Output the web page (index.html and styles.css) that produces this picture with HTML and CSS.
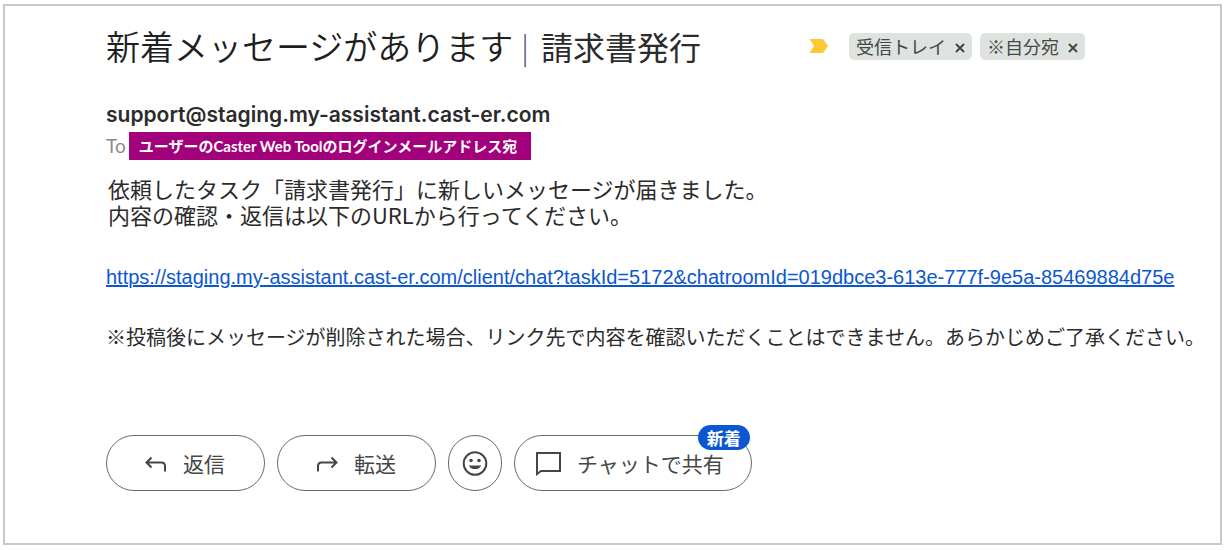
FILE: index.html
```
<!DOCTYPE html>
<html lang="ja">
<head>
	<meta charset="UTF-8">
	<title>新着メッセージがあります｜請求書発行</title>
	<link rel="stylesheet" href="styles.css">
</head>
<body>

	<main class="mail">
		<header class="mail_header">
			<h1 class="subject"><span class="subject_notice">新着メッセージがあります</span><span class="subject_bar">|</span><span class="subject_task">請求書発行</span></h1>
			<svg class="important" width="20" height="16" viewBox="0 0 20 16" aria-hidden="true">
				<path d="M0.5 1h12.5q1 0 1.6 .8L19 8l-4.4 6.200q-.6 .8-1.6 .8H0.5L5 8z" fill="#fcc934"/>
			</svg>
			<div class="label">受信トレイ<button type="button" class="label_remove" aria-label="受信トレイを削除"><svg width="10" height="10" viewBox="0 0 10 10"><path d="M1 1l8 8M9 1l-8 8"/></svg></button></div>
			<div class="label">※自分宛<button type="button" class="label_remove" aria-label="※自分宛を削除"><svg width="10" height="10" viewBox="0 0 10 10"><path d="M1 1l8 8M9 1l-8 8"/></svg></button></div>
		</header>

		<div class="sender">support@staging.my-assistant.cast-er.com</div>
		<div class="recipient">
			<span>To</span>
			<span class="recipient_note">ユーザーのCaster Web Toolのログインメールアドレス宛</span>
		</div>

		<p class="message">依頼したタスク「請求書発行」に新しいメッセージが届きました。<br>内容の確認・返信は以下のURLから行ってください。</p>
		<a class="chat_link" href="https://staging.my-assistant.cast-er.com/client/chat?taskId=5172&amp;chatroomId=019dbce3-613e-777f-9e5a-85469884d75e">https://staging.my-assistant.cast-er.com/client/chat?taskId=5172&amp;chatroomId=019dbce3-613e-777f-9e5a-85469884d75e</a>
		<p class="caution">※投稿後にメッセージが削除された場合、リンク先で内容を確認いただくことはできません。あらかじめご了承ください。</p>

		<div class="actions">
			<button type="button" class="action">
				<svg width="24" height="24" viewBox="0 0 24 24"><path d="M7.500 6.500L2.500 11.500L7.500 16.500M3 11.500H17.500Q21 11.500 21 15V20.500"/></svg>
				返信
			</button>
			<button type="button" class="action">
				<svg width="24" height="24" viewBox="0 0 24 24"><path d="M16.500 6.500L21.500 11.500L16.500 16.500M21 11.500H6.500Q3 11.500 3 15V20.500"/></svg>
				転送
			</button>
			<button type="button" class="action action_emoji" aria-label="リアクションを追加">
				<svg width="28" height="28" viewBox="0 0 28 28">
					<circle cx="14" cy="14.500" r="11.300"/>
					<g class="solid"><circle cx="10" cy="11.500" r="1.800"/><circle cx="18" cy="11.500" r="1.800"/><path d="M7.800 16.500h12.400a6.600 5.500 0 0 1-12.400 0z"/></g>
				</svg>
			</button>
			<button type="button" class="action action_chat">
				<svg width="26" height="26" viewBox="0 0 26 26"><path d="M2 3h23v18H6l-4 3z"/></svg>
				チャットで共有
				<span class="badge">新着</span>
			</button>
		</div>
	</main>

</body>
</html>
```
FILE: styles.css
```
:root {
	--text: #2b2b2b;
	--icon: #444746;
	--line: #666968;
	--blue: #0b57d0;
}
* {
	box-sizing: border-box;
}
body {
	margin: 0;
	padding: 4px 5px 5px 3px;
	min-height: 100vh;
	display: flex;
	background: #fff;
	color: var(--text);
	font-family: "Noto Sans CJK JP", sans-serif;
}
.mail {
	flex: 1;
	min-width: 0;
	padding: 20px 24px 20px 101px;
	border: 2px solid #c8c8c8;
}
.mail_header {
	display: flex;
	align-items: center;
	height: 40px;
	margin-right: 111px;
}
.subject {
	display: flex;
	align-items: center;
	margin: 0 auto 0 0;
	font-size: 32px;
	font-weight: 400;
	line-height: 40px;
	white-space: nowrap;
}
.subject_notice {
	font-size: 34px;
	font-weight: 350;
	color: #1f1f1f;
}
.subject_bar {
	padding: 0 12px 0 8px;
	font-size: 30px;
	font-weight: 300;
	color: #5f4a78;
}
.important {
	margin-right: 12px;
}
.label {
	display: flex;
	align-items: center;
	gap: 9px;
	height: 27px;
	margin-left: 8px;
	padding: 0 7px;
	border-radius: 5px;
	background: #dfe3e0;
	color: var(--icon);
	font-size: 18px;
	line-height: 26px;
	white-space: nowrap;
}
.label_remove {
	display: flex;
	margin-top: 3px;
	padding: 0;
	border: 0;
	background: none;
}
.label_remove svg {
	stroke: var(--icon);
	stroke-width: 2;
}
.sender {
	margin-top: 34px;
	font-family: Inter, sans-serif;
	font-size: 21px;
	font-weight: 600;
	line-height: 30px;
}
.recipient {
	display: flex;
	align-items: center;
	gap: 3px;
	margin-top: 2px;
	font-family: Lato, "Noto Sans CJK JP", sans-serif;
	font-size: 19px;
	line-height: 28px;
	color: #8a8a8a;
}
.recipient_note {
	padding: 0 14px 0 10px;
	background: #a3007b;
	color: #fff;
	font-size: 15px;
	font-weight: 700;
}
.message {
	margin: 15px 0 0;
	padding-left: 2px;
	font-size: 22px;
	line-height: 26px;
}
.chat_link {
	display: block;
	margin-top: 37px;
	color: var(--blue);
	font-family: "Liberation Sans", Arial, sans-serif;
	font-size: 20px;
	line-height: 26px;
}
.caution {
	margin: 30px 0 0;
	font-size: 20px;
	line-height: 34px;
	white-space: nowrap;
}
.actions {
	display: flex;
	gap: 12px;
	margin-top: 81px;
}
.action {
	position: relative;
	display: flex;
	align-items: center;
	gap: 15px;
	height: 56px;
	padding: 0 39px 0 37px;
	border: 1px solid var(--line);
	border-radius: 28px;
	background: #fff;
	color: var(--icon);
	font: 400 21px "Noto Sans CJK JP", sans-serif;
	white-space: nowrap;
}
.action svg {
	fill: none;
	stroke: var(--icon);
	stroke-width: 2;
}
.action .solid {
	fill: var(--icon);
	stroke: none;
}
.action_emoji {
	padding: 0 12px;
}
.action_chat {
	gap: 16px;
	padding: 0 27px 0 20px;
}
.badge {
	position: absolute;
	top: -11px;
	right: 1px;
	padding: 0 9px;
	border-radius: 13px;
	background: var(--blue);
	color: #fff;
	font-size: 17px;
	font-weight: 700;
	line-height: 25px;
}
```
